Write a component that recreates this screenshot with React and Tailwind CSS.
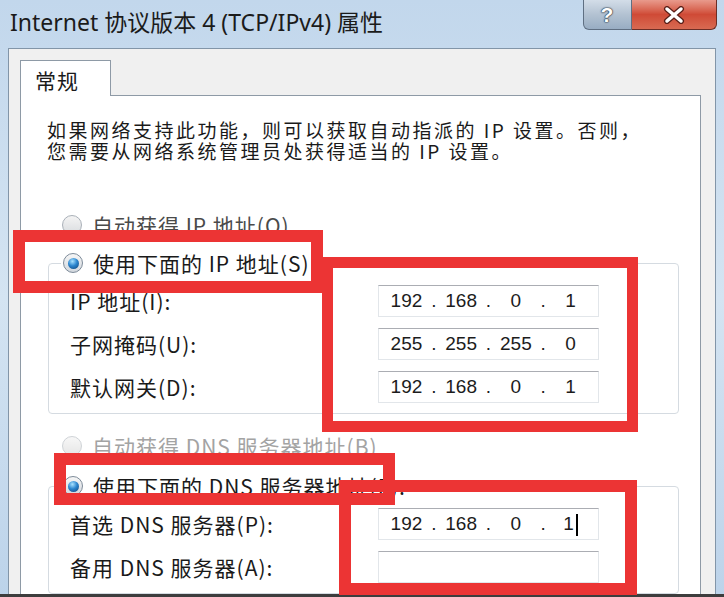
import React from 'react';

const cjk = "font-['Noto_Sans_CJK_SC','Noto_Sans',sans-serif]";

function Radio({ checked, disabled }) {
  if (checked) {
    return (
      <span className="w-[20px] h-[20px] rounded-full border border-[#7d8b99] bg-gradient-to-b from-[#f6f6f6] to-[#d3d8de] flex items-center justify-center shrink-0">
        <span className="w-[11px] h-[11px] rounded-full bg-[radial-gradient(circle_at_40%_30%,#a8e2ff_0%,#2c86cf_45%,#0c3f73_100%)]" />
      </span>
    );
  }
  return (
    <span
      className={
        'w-[20px] h-[20px] rounded-full border shrink-0 bg-gradient-to-b ' +
        (disabled ? 'border-[#cfd3d7] from-[#f7f7f7] to-[#e6e6e6]' : 'border-[#a9b0b8] from-[#f4f4f4] to-[#d9dcdf]')
      }
    />
  );
}

function IpField({ parts, caret }) {
  return (
    <div className="w-[221px] h-[32px] bg-white border border-[#e2e6ea] border-t-[#abadb3] flex items-center px-[3px] font-['Liberation_Sans',sans-serif] text-[19px] tracking-normal text-[#1c1c1c]">
      {parts.map((p, i) => (
        <React.Fragment key={i}>
          {i > 0 && <span className="w-[6px] text-center">.</span>}
          <span className="w-[50px] text-center">
            {p}
            {caret && i === 3 && <span className="inline-block w-[2px] h-[22px] bg-black align-middle ml-[2px]" />}
          </span>
        </React.Fragment>
      ))}
    </div>
  );
}

function Row({ label, children }) {
  return (
    <div className="flex items-center h-[32px] pl-[9px]">
      <span className="w-[308px] text-[21px] leading-[24px] text-[#1a1a1a]">{label}</span>
      {children}
    </div>
  );
}

function Group({ legend, children }) {
  return (
    <fieldset className="ml-[27px] w-[631px] border border-[#d5dbe1] rounded-[4px] pl-[12px] pt-[10px] pb-[10px] flex flex-col gap-[11px]">
      <legend className="px-[2px] bg-white">
        <span className="flex items-center gap-[10px] h-[24px]">
          <Radio checked />
          <span className="text-[21px] leading-[24px] text-[#1a1a1a] pr-[2px]">{legend}</span>
        </span>
      </legend>
      {children}
    </fieldset>
  );
}

function RedBox({ className }) {
  return <div className={'absolute border-[#ec3434] ' + className} />;
}

export default function App() {
  return (
    <div className={`relative w-[724px] h-[597px] overflow-hidden flex flex-col bg-gradient-to-b from-[#c2d7ec] via-[#d4e4f2] to-[#bcd3ea] tracking-[1px] ${cjk}`}>
      {/* title bar */}
      <div className="h-[48px] flex items-start shrink-0">
        <div className="pl-[10px] pt-[7px] text-[23px] leading-[30px] tracking-normal text-[#1b1b1b] font-['Noto_Sans','Noto_Sans_CJK_SC',sans-serif]">
          Internet 协议版本 4 (TCP/IPv4) 属性
        </div>
        <div className="ml-auto mr-[7px] flex h-[30px]">
          <button className="w-[49px] h-[30px] border border-t-0 border-[#5f6f82] rounded-bl-[6px] bg-gradient-to-b from-[#d3dde8] via-[#b3c2d2] to-[#98adc3] flex items-center justify-center text-white text-[21px] font-bold font-['Liberation_Sans',sans-serif] [text-shadow:0_0_2px_#23313f,0_0_1px_#23313f,0_0_1px_#23313f]">
            ?
          </button>
          <button className="w-[85px] h-[30px] border border-t-0 border-l-0 border-[#6b2e26] rounded-br-[6px] bg-gradient-to-b from-[#e89a8c] via-[#cf4a36] to-[#d86a52] flex items-center justify-center">
            <svg width="24" height="18" viewBox="0 0 24 18">
              <path d="M5 3 L19 15 M19 3 L5 15" stroke="#5a1f18" strokeWidth="6" strokeLinecap="round" />
              <path d="M5 3 L19 15 M19 3 L5 15" stroke="#ffffff" strokeWidth="3.5" strokeLinecap="round" />
            </svg>
          </button>
        </div>
      </div>

      {/* window body */}
      <div className="flex-1 mx-[8px] border-t border-l border-r border-[#8295a8] bg-[#f0f0f0] pt-[11px] pl-[11px] flex flex-col min-h-0">
        <div className="relative z-10 w-[91px] h-[36px] -mb-px border-t border-l border-r border-[#8e9aa6] bg-white flex items-center pl-[14px] pt-[4px] text-[21px] text-[#1a1a1a]">
          常规
        </div>
        <div className="w-[681px] flex-1 border-t border-l border-r border-[#8e9aa6] bg-white overflow-hidden">
          <div className="pl-[26px] pt-[23px] text-[19px] leading-[21px] tracking-[2.5px] text-[#1a1a1a] whitespace-nowrap">
            <div>如果网络支持此功能，则可以获取自动指派的 IP 设置。否则，</div>
            <div>您需要从网络系统管理员处获得适当的 IP 设置。</div>
          </div>

          <div className="mt-[52px] pl-[41px] flex items-center gap-[10px] h-[24px]">
            <Radio />
            <span className="text-[21px] leading-[24px] text-[#4a4a4a]">自动获得 IP 地址(O)</span>
          </div>

          <div className="mt-[14px]">
            <Group legend="使用下面的 IP 地址(S)">
              <Row label="IP 地址(I):">
                <IpField parts={['192', '168', '0', '1']} />
              </Row>
              <Row label="子网掩码(U):">
                <IpField parts={['255', '255', '255', '0']} />
              </Row>
              <Row label="默认网关(D):">
                <IpField parts={['192', '168', '0', '1']} />
              </Row>
            </Group>
          </div>

          <div className="mt-[20px] pl-[41px] flex items-center gap-[10px] h-[24px]">
            <Radio disabled />
            <span className="text-[21px] leading-[24px] text-[#a3a3a3]">自动获得 DNS 服务器地址(B)</span>
          </div>

          <div className="mt-[16px]">
            <Group legend="使用下面的 DNS 服务器地址(E):">
              <Row label="首选 DNS 服务器(P):">
                <IpField parts={['192', '168', '0', '1']} caret />
              </Row>
              <Row label="备用 DNS 服务器(A):">
                <div className="w-[221px] h-[32px] bg-white border border-[#e2e6ea] border-t-[#abadb3]" />
              </Row>
            </Group>
          </div>
        </div>
      </div>
      <div className="h-[3px] bg-[#3d3d3d] shrink-0" />

      {/* red annotation boxes */}
      <RedBox className="left-[13px] top-[230px] w-[310px] h-[63px] border-[12px]" />
      <RedBox className="left-[322px] top-[257px] w-[316px] h-[175px] border-[11px]" />
      <RedBox className="left-[339px] top-[480px] w-[298px] h-[115px] border-[12px]" />
      <RedBox className="left-[54px] top-[453px] w-[341px] h-[52px] border-[12px]" />
    </div>
  );
}
